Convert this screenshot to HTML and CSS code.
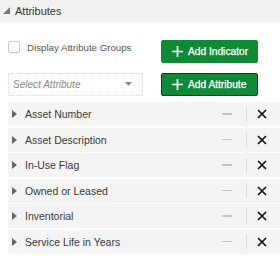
FILE: index.html
```html
<!DOCTYPE html>
<html lang="en">
    <head>
        <title>Attributes</title>
        <meta charset="UTF-8">
        <meta name="viewport" content="width=device-width, initial-scale=1">
        <link rel="stylesheet" href="styles.css">
    </head>
    <body>
        <div id="panel">
            <div class="panelHead">
                <svg class="collapse" width="8" height="8" viewBox="0 0 8 8"><polygon points="7,0 7,7 0,7"/></svg>
                <span>Attributes</span>
            </div>
            <div class="tools">
                <label class="check">
                    <span class="box"></span>
                    <span>Display Attribute Groups</span>
                </label>
                <button class="btn">
                    <svg width="11" height="11" viewBox="0 0 11 11"><path d="M5.5 0V11M0 5.5H11"/></svg>
                    Add Indicator
                </button>
                <div class="select">
                    <span>Select Attribute</span>
                    <svg width="7" height="5" viewBox="0 0 7 5"><polygon points="0,0 7,0 3.5,4"/></svg>
                </div>
                <button class="btn focus">
                    <svg width="11" height="11" viewBox="0 0 11 11"><path d="M5.5 0V11M0 5.5H11"/></svg>
                    Add Attribute
                </button>
            </div>
            <ul class="list">
                <li class="row">
                    <svg class="arrow" width="5" height="8" viewBox="0 0 5 8"><polygon points="0,0 5,4 0,8"/></svg>
                    <span class="name">Asset Number</span>
                    <span class="minus"></span>
                    <span class="sep"></span>
                    <svg class="del" width="10" height="10" viewBox="0 0 10 10"><path d="M1 1L9 9M9 1L1 9"/></svg>
                </li>
                <li class="row">
                    <svg class="arrow" width="5" height="8" viewBox="0 0 5 8"><polygon points="0,0 5,4 0,8"/></svg>
                    <span class="name">Asset Description</span>
                    <span class="minus"></span>
                    <span class="sep"></span>
                    <svg class="del" width="10" height="10" viewBox="0 0 10 10"><path d="M1 1L9 9M9 1L1 9"/></svg>
                </li>
                <li class="row">
                    <svg class="arrow" width="5" height="8" viewBox="0 0 5 8"><polygon points="0,0 5,4 0,8"/></svg>
                    <span class="name">In-Use Flag</span>
                    <span class="minus"></span>
                    <span class="sep"></span>
                    <svg class="del" width="10" height="10" viewBox="0 0 10 10"><path d="M1 1L9 9M9 1L1 9"/></svg>
                </li>
                <li class="row">
                    <svg class="arrow" width="5" height="8" viewBox="0 0 5 8"><polygon points="0,0 5,4 0,8"/></svg>
                    <span class="name">Owned or Leased</span>
                    <span class="minus"></span>
                    <span class="sep"></span>
                    <svg class="del" width="10" height="10" viewBox="0 0 10 10"><path d="M1 1L9 9M9 1L1 9"/></svg>
                </li>
                <li class="row">
                    <svg class="arrow" width="5" height="8" viewBox="0 0 5 8"><polygon points="0,0 5,4 0,8"/></svg>
                    <span class="name">Inventorial</span>
                    <span class="minus"></span>
                    <span class="sep"></span>
                    <svg class="del" width="10" height="10" viewBox="0 0 10 10"><path d="M1 1L9 9M9 1L1 9"/></svg>
                </li>
                <li class="row">
                    <svg class="arrow" width="5" height="8" viewBox="0 0 5 8"><polygon points="0,0 5,4 0,8"/></svg>
                    <span class="name">Service Life in Years</span>
                    <span class="minus"></span>
                    <span class="sep"></span>
                    <svg class="del" width="10" height="10" viewBox="0 0 10 10"><path d="M1 1L9 9M9 1L1 9"/></svg>
                </li>
            </ul>
        </div>
    </body>
</html>
```

FILE: styles.css
```css
body,p,ul,ol{margin: 0;padding: 0}
li{list-style: none}

html,body{height: 100%;overflow: hidden;background: white;font: 11px "Liberation Sans", Arial, sans-serif;color: #333}

.panelHead{height: 22px;background: #f2f2f2;display: flex;align-items: center;padding-left: 3px;font-size: 11px;color: #333}
.panelHead .collapse{fill: #777;margin-right: 4px;margin-top: -1px}

.tools{display: grid;grid-template-columns: 135px 97px;grid-template-rows: 23px 23px;column-gap: 18px;row-gap: 10px;padding: 18px 0 0 8px}

.check{display: flex;align-items: center;gap: 7px;font-size: 9.7px;color: #555;align-self: start;margin-top: 1px}
.check .box{width: 10px;height: 10px;border: 1px solid #c8c8c8;border-radius: 2px;background: white}

.btn{display: flex;align-items: center;gap: 5px;padding: 0 0 0 10px;border: 1px solid #118a37;border-radius: 2px;background: #118a37;color: white;font: 10.2px "Liberation Sans", Arial, sans-serif;-webkit-text-stroke: 0.25px white}
.btn svg{stroke: white;stroke-width: 1.7}
.btn.focus{border-color: #2a2a2a}

.select{display: flex;align-items: center;justify-content: space-between;padding: 0 10px 0 4px;border: 1px dotted #d8d8d8;font-style: italic;font-size: 10px;color: #888}
.select svg{fill: #888}

.list{padding: 6px 0 0 8px}
.row{height: 24px;margin-bottom: 1.5px;background: #f4f4f4;display: flex;align-items: center;padding-left: 4px}
.row .arrow{fill: #666;margin-right: 8px}
.row .name{flex: 1;font-size: 10.5px;color: #3a3a3a}
.row .minus{width: 10px;height: 1.5px;background: #c4c4c4;margin-right: 14px}
.row .sep{width: 1px;height: 15px;background: #dcdcdc;margin-right: 10px}
.row .del{stroke: #111;stroke-width: 1.7;margin-right: 13px}
```
